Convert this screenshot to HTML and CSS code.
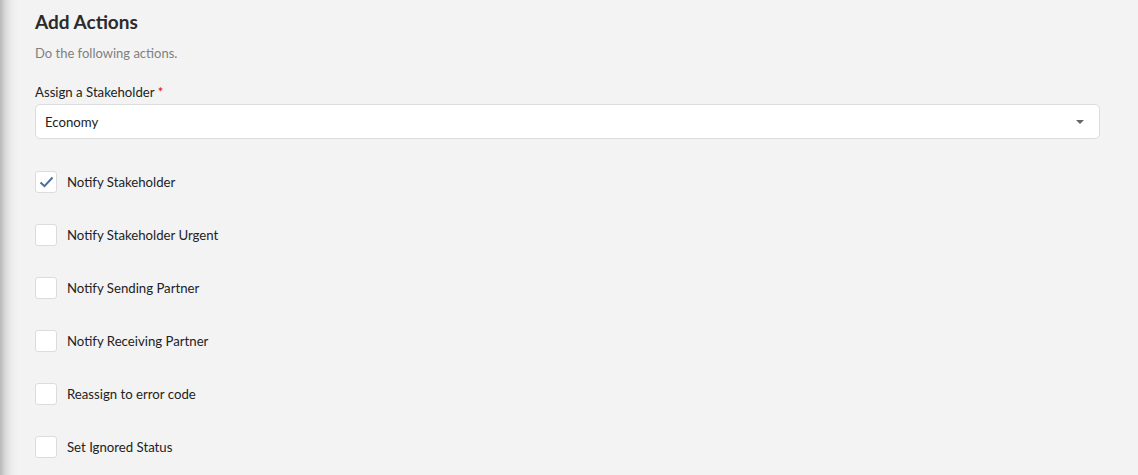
FILE: index.html
```html
<!DOCTYPE html>
<html>
<head>
    <title>Add Actions</title>
    <link rel="stylesheet" href="styles.css">
</head>
<body>
    <div class="panel">
        <h2 class="title">Add Actions</h2>
        <p class="subtitle">Do the following actions.</p>

        <div class="field">
            <label class="field-label">Assign a Stakeholder <span class="req">*</span></label>
            <div class="select">
                <span>Economy</span>
                <span class="caret"></span>
            </div>
        </div>

        <ul class="actions">
            <li class="action">
                <span class="box checked">
                    <svg width="15" height="12" viewBox="0 0 15 12"><path d="M1.5 6.5 L5.5 10.2 L13.5 1.5" fill="none" stroke="#4a6da0" stroke-width="2"/></svg>
                </span>
                Notify Stakeholder
            </li>
            <li class="action"><span class="box"></span>Notify Stakeholder Urgent</li>
            <li class="action"><span class="box"></span>Notify Sending Partner</li>
            <li class="action"><span class="box"></span>Notify Receiving Partner</li>
            <li class="action"><span class="box"></span>Reassign to error code</li>
            <li class="action"><span class="box"></span>Set Ignored Status</li>
        </ul>
    </div>
</body>
</html>
```

FILE: styles.css
```css
html, body {
    margin: 0;
    height: 100%;
}

body {
    background: linear-gradient(to right, #b9b9b9 0px, #dcdcdc 6px, #ededed 12px, #f3f3f3 18px, #f3f3f3 100%);
    font-family: 'Lato', sans-serif;
    color: #222;
    overflow: hidden;
}

.panel {
    padding: 10px 38px 0 35px;
}

.title {
    margin: 0;
    font-size: 19px;
    font-weight: 700;
    line-height: 24px;
    color: #2b2b2b;
}

.subtitle {
    margin: 9px 0 0;
    font-size: 13px;
    line-height: 20px;
    color: #808080;
}

.field {
    margin-top: 21px;
}

.field-label {
    display: block;
    font-size: 13.2px;
    line-height: 16px;
    color: #222;
}

.req {
    color: #e00;
}

.select {
    display: flex;
    align-items: center;
    justify-content: space-between;
    margin-top: 4px;
    height: 33px;
    padding: 0 15px 0 9px;
    background-color: #fff;
    border: 1px solid #dcdcdc;
    border-radius: 5px;
    font-size: 13.2px;
}

.caret {
    width: 0;
    height: 0;
    border-left: 4px solid transparent;
    border-right: 4px solid transparent;
    border-top: 4px solid #666;
}

.actions {
    list-style: none;
    margin: 32px 0 0;
    padding: 0;
}

.action {
    display: flex;
    align-items: center;
    height: 21px;
    margin-bottom: 32px;
    font-size: 13.2px;
    color: #222;
}

.box {
    display: flex;
    align-items: center;
    justify-content: center;
    box-sizing: border-box;
    width: 22px;
    height: 22px;
    margin-right: 10px;
    background-color: #fff;
    border: 1px solid #dcdcdc;
    border-radius: 3px;
}
```
